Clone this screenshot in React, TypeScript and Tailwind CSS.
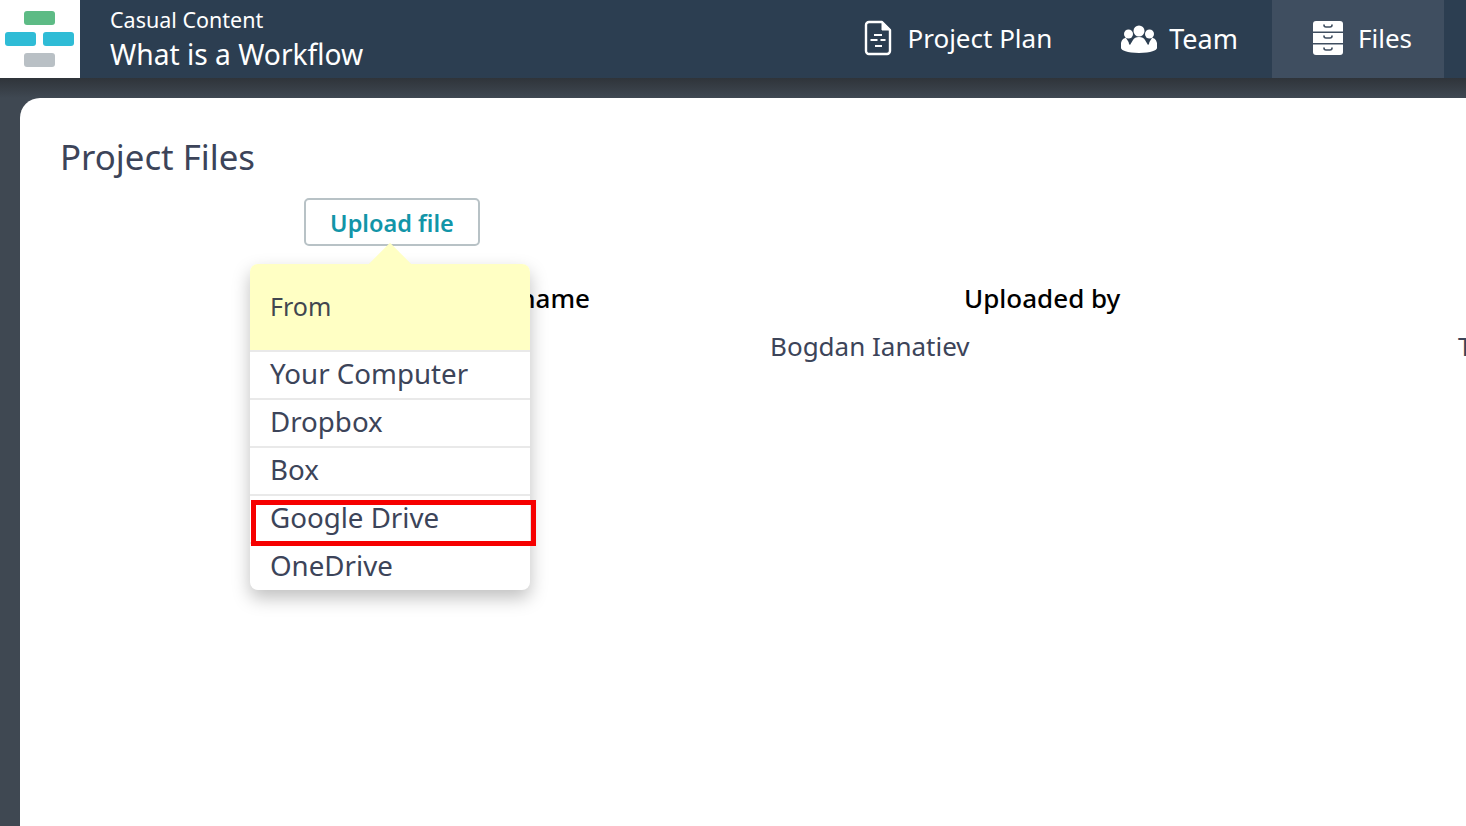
const menuItems = ["Your Computer", "Dropbox", "Box", "Google Drive", "OneDrive"]

function Logo() {
  return (
    <div className="flex h-[78px] w-20 shrink-0 flex-col items-center justify-center gap-[7px] bg-white pr-[1px]">
      <div className="h-[14px] w-[31px] rounded-[3px] bg-[#5dbb85]" />
      <div className="flex gap-[7px]">
        <div className="h-[14px] w-[31px] rounded-[3px] bg-[#2fbcd6]" />
        <div className="h-[14px] w-[31px] rounded-[3px] bg-[#2fbcd6]" />
      </div>
      <div className="h-[14px] w-[31px] rounded-[3px] bg-[#b9c0c5]" />
    </div>
  )
}

function PlanIcon() {
  return (
    <svg viewBox="0 0 28 36" className="h-9 w-7" fill="none" stroke="white" strokeWidth="2.4" strokeLinecap="round" strokeLinejoin="round">
      <path d="M5 2h13l8 8v21a3 3 0 0 1-3 3H5a3 3 0 0 1-3-3V5a3 3 0 0 1 3-3Z" />
      <path d="M18 2v8h8Z" fill="white" strokeWidth="1" />
      <path d="M10 15h8M6.500 20h7M16.500 20h5M11 26h7" strokeWidth="2.2" strokeLinecap="butt" />
    </svg>
  )
}

function TeamIcon() {
  return (
    <svg viewBox="0 0 36 28" className="h-7 w-9" fill="white">
      <circle cx="18" cy="6" r="5.500" />
      <circle cx="7.500" cy="9" r="4.500" />
      <circle cx="28.500" cy="9" r="4.500" />
      <path d="M5 13c2 3 3 4 3 6l1 1 3-5c1-2 3-3 6-3s5 1 6 3l3 5 1-1c0-2 1-3 3-6 2 0 4 1 5 5v5c0 2-6 5-18 5S0 25 0 23v-5c1-4 3-5 5-5Z" />
    </svg>
  )
}

function FilesIcon() {
  return (
    <svg viewBox="0 0 30 34" className="h-[34px] w-[30px]" fill="white">
      <path d="M3 0h24a3 3 0 0 1 3 3v7.500H0V3a3 3 0 0 1 3-3Z" />
      <rect x="0" y="12" width="30" height="10" />
      <path d="M0 23.500h30V31a3 3 0 0 1-3 3H3a3 3 0 0 1-3-3Z" />
      <g fill="none" stroke="#3f4e60" strokeWidth="1.600" strokeLinecap="round">
        <path d="M11 4c0 2 1 2 2 2h4c1 0 2 0 2-2" />
        <path d="M11 15c0 2 1 2 2 2h4c1 0 2 0 2-2" />
        <path d="M11 27c0 2 1 2 2 2h4c1 0 2 0 2-2" />
      </g>
    </svg>
  )
}

function UploadMenu() {
  return (
    <div className="absolute left-[230px] top-[166px] w-[280px] rounded-lg bg-white text-[#3c4459] shadow-[0_8px_18px_rgba(0,0,0,0.25)]">
      {/* little arrow up to the button */}
      <div className="absolute left-[125px] top-[-15px] h-[30px] w-[30px] rotate-45 bg-[#ffffc4]" />
      <div className="relative flex h-[86px] items-center rounded-t-lg bg-[#ffffc4] pl-[20px] text-[25px] text-[#41464f]">
        From
      </div>
      {menuItems.map((item, i) => (
        <div
          key={item}
          className={`flex h-[48px] items-center border-t-2 border-[#e9e9e9] pb-[3px] pl-[20px] text-[27.700px] ${i === menuItems.length - 1 ? "h-[46px] rounded-b-lg" : ""}`}
        >
          {item}
        </div>
      ))}
      {/* red highlight round the Google Drive row */}
      <div className="absolute left-[1px] top-[236px] h-[46px] w-[285px] border-[5px] border-[#f60000]" />
    </div>
  )
}

export default function App() {
  return (
    <div className="flex h-[826px] w-[1466px] flex-col overflow-hidden bg-[#3f4852] font-['Noto_Sans',sans-serif]">
      <header className="flex h-[78px] shrink-0 items-stretch bg-[#2c3e51] text-white">
        <Logo />
        <div className="flex flex-col pl-[30px] pt-[5px]">
          <div className="text-[21.500px] leading-[30px]">Casual Content</div>
          <div className="text-[28.200px] leading-[38px]">What is a Workflow</div>
        </div>
        <nav className="ml-auto mr-[22px] flex items-stretch">
          <div className="flex items-center gap-[15px] pb-[2px] pr-[69px] text-[26px]">
            <PlanIcon />
            <span>Project Plan</span>
          </div>
          <div className="flex items-center gap-[12px] pr-[34px] text-[27px]">
            <TeamIcon />
            <span>Team</span>
          </div>
          <div className="flex w-[172px] items-center gap-[15px] bg-[#3f4e60] pb-[2px] pl-[41px] text-[26px]">
            <FilesIcon />
            <span>Files</span>
          </div>
        </nav>
      </header>
      <div className="h-5 shrink-0 bg-gradient-to-b from-[#2f343a] to-[#3f4852]" />
      <div className="flex min-h-0 flex-1 pl-5">
        <main className="relative flex-1 overflow-hidden rounded-tl-[20px] bg-white pl-[40px] pt-[35px]">
          <h1 className="text-[34.800px] leading-[48px] text-[#3c4459]">Project Files</h1>
          <button className="ml-[244px] mt-[17px] flex h-[48px] w-[176px] items-center justify-center rounded-[5px] border-2 border-[#b8c2c6] pt-[4px] text-[23.500px] font-semibold text-[#1295a8]">
            Upload file
          </button>
          <div className="mt-[32px] flex text-[26px] font-medium leading-[40px] text-black">
            <div className="w-[530px] text-right">File name</div>
            <div className="ml-[374px]">Uploaded by</div>
          </div>
          <div className="mt-[8px] flex whitespace-nowrap text-[26px] leading-[40px] text-[#3c4459]">
            <div className="ml-[710px] w-[688px] shrink-0">Bogdan Ianatiev</div>
            <div className="shrink-0">T</div>
          </div>
          <UploadMenu />
        </main>
      </div>
    </div>
  )
}
